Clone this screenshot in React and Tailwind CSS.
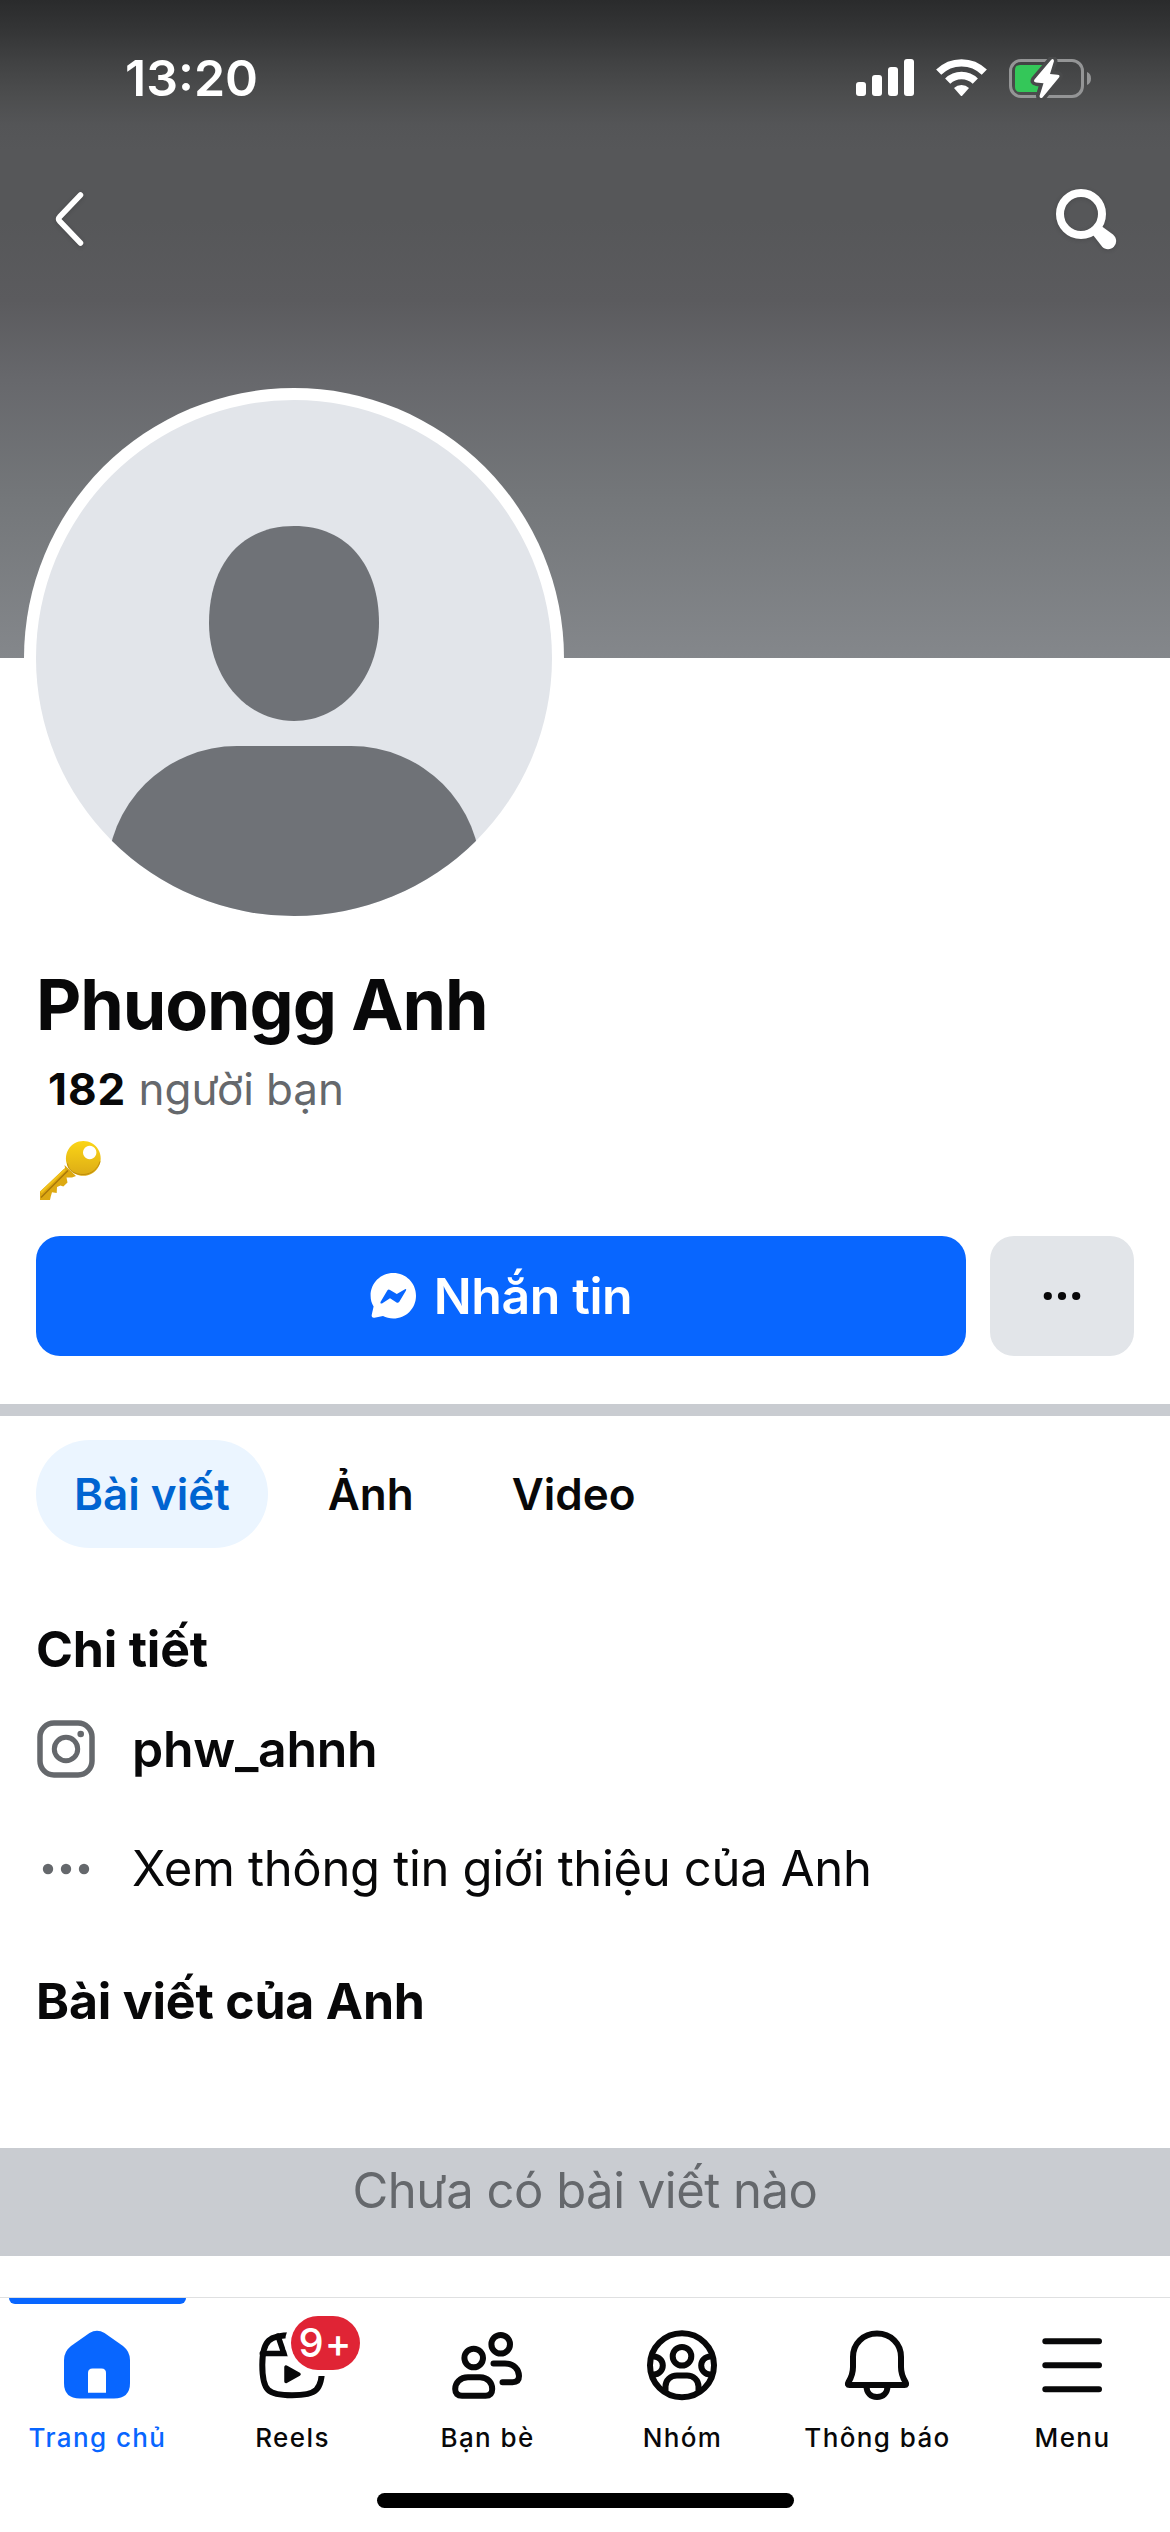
import { useState } from 'react';

const SignalIcon = () => (
  <svg width="58" height="38" viewBox="0 0 58 38" fill="white">
    <rect x="0" y="23" width="10" height="14" rx="3" />
    <rect x="16" y="16" width="10" height="21" rx="3" />
    <rect x="32" y="8" width="10" height="29" rx="3" />
    <rect x="48" y="0" width="10" height="37" rx="3" />
  </svg>
);

const WifiIcon = () => (
  <svg width="51" height="38" viewBox="0 0 51 38" fill="none" stroke="white" strokeWidth="7.3">
    <path d="M2.7 13.2A32.3 32.3 0 0 1 48.3 13.2" />
    <path d="M11.7 22.2A19.5 19.5 0 0 1 39.3 22.2" />
    <path d="M18 29A11 11 0 0 1 33 29L26.4 36.4Q25.5 37.4 24.6 36.4Z" fill="white" stroke="none" />
  </svg>
);

const BatteryIcon = () => (
  <svg width="82" height="43" viewBox="0 0 82 43" fill="none">
    <rect x="1.5" y="3.5" width="72" height="36" rx="10.5" stroke="#949596" strokeWidth="3" />
    <path d="M78 15V28C80.800 27 82 24.500 82 21.500S80.800 16 78 15Z" fill="#949596" />
    <path d="M11 8H36L28 35H11Q6 35 6 30V13Q6 8 11 8Z" fill="#34c759" />
    <path
      d="M42 3L25.5 22.500Q24 25 27 25.400L34.500 26.200L30.500 39Q30.600 42 33.500 40.500L50 20.500Q51.500 18 48.500 17.700L41 17L45 4Q44.500 0.800 42 3Z"
      fill="white"
      stroke="#494a4b"
      strokeWidth="7"
      paintOrder="stroke"
    />
  </svg>
);

const BackIcon = () => (
  <svg width="36" height="60" viewBox="0 0 36 60" fill="none" className="drop-shadow-sm">
    <path d="M29.500 6L8.500 28Q6.500 30 8.500 32L29.500 54" stroke="white" strokeWidth="5.500" strokeLinecap="round" />
  </svg>
);

const SearchIcon = () => (
  <svg width="62" height="62" viewBox="0 0 62 62" fill="none" className="drop-shadow-sm">
    <circle cx="26" cy="26" r="21" stroke="white" strokeWidth="8" />
    <path d="M38 47L47 58.500C50 62 56 62 59 58.500C62 55 62 50 58 46.500L47 38.500Z" fill="white" />
  </svg>
);

const Avatar = () => (
  <svg width="516" height="516" viewBox="0 0 516 516">
    <defs>
      <clipPath id="avatar-clip">
        <circle cx="258" cy="258" r="258" />
      </clipPath>
    </defs>
    <g clipPath="url(#avatar-clip)">
      <rect width="516" height="516" fill="#e2e5ea" />
      <g fill="#6f7277">
        <path d="M258 126C312 126 343 166 343 223C343 277 306 321 258 321S173 277 173 223C173 166 204 126 258 126Z" />
        <path d="M201 346H315A130 130 0 0 1 445 476V516H71V476A130 130 0 0 1 201 346Z" />
      </g>
    </g>
  </svg>
);

const KeyIcon = () => (
  <svg width="62" height="60" viewBox="0 0 62 60">
    <defs>
      <linearGradient id="key-gold" x1="0" y1="0" x2="0" y2="1">
        <stop offset="0" stopColor="#fbd516" />
        <stop offset="1" stopColor="#dcab16" />
      </linearGradient>
    </defs>
    <path
      d="M24.500 24L25 27L0 50.500V59H10L10.700 55.700L12 51.300L16.700 52L17 46L20.500 44.500L23.300 45.500L27.500 41.500L26.500 36.500L32 36.500L36 35Z"
      fill="#dda912"
    />
    <path d="M28 29.500L1 56.500" stroke="#a87708" strokeWidth="1.500" />
    <path d="M25 28.500L1 51.500" stroke="#f1c21b" strokeWidth="2.200" />
    <path
      fillRule="evenodd"
      d="M43.300 0A17.400 17.400 0 1 1 43.290 0ZM49.700 4.800A6.700 6.700 0 1 0 49.710 4.800Z"
      fill="url(#key-gold)"
    />
    <path d="M27.500 22.500C28 29.500 35 34 44 33.500C52 33 58 27.500 60 20.500" fill="none" stroke="#c08d0c" strokeWidth="1" />
  </svg>
);

const MessengerIcon = () => (
  <svg width="46" height="46" viewBox="0 0 46 46">
    <path
      d="M23.300 0C36 0 46 10 46 22.700S36 45.500 23.300 45.500C19.500 45.500 16 44.600 13 43L4.500 44.800C2.300 45.100 1.200 43.800 1.800 41.600L3.600 33.500C1.600 30.300 .6 26.600 .6 22.700C.6 10 10.600 0 23.300 0Z"
      fill="white"
    />
    <path
      d="M10.500 29L17.300 17.500Q18.500 16 20 17L26.800 21L35 16.200Q36.800 15.800 36 17.500L29.300 28.700Q28 30.600 26.200 29.300L20 25.200L12 30.500Q9.800 31 10.500 29Z"
      fill="#0866ff"
    />
  </svg>
);

const Dots = ({ className, r, gap }) => (
  <svg width="60" height="60" viewBox="0 0 60 60" fill="currentColor" className={className}>
    <circle cx={30 - gap} cy="30" r={r} />
    <circle cx="30" cy="30" r={r} />
    <circle cx={30 + gap} cy="30" r={r} />
  </svg>
);

const InstagramIcon = () => (
  <svg width="60" height="60" viewBox="0 0 60 60" fill="none" stroke="#65686c">
    <rect x="4" y="4" width="52" height="52" rx="14" strokeWidth="5.500" />
    <circle cx="30" cy="30" r="11.700" strokeWidth="5" />
    <circle cx="44.700" cy="15" r="3.300" fill="#65686c" stroke="none" />
  </svg>
);

const HomeIcon = () => (
  <>
    <path
      d="M28.500 4Q36 -.5 43.500 4L62 17Q69 22.500 69 31V54Q69 69.500 53 69.500H19Q3 69.500 3 54V31Q3 22.500 10 17Z"
      fill="currentColor"
      stroke="none"
    />
    <path d="M27 63.700V44Q27 39.500 31.500 39.500H40.500Q45 39.500 45 44V63.700Z" fill="white" stroke="none" />
  </>
);

const ReelsIcon = () => (
  <>
    <path d="M36 6.300C14 6.300 6.300 10 6.300 36S12 66.300 36 66.300S66.300 62 66.300 36S60 6.300 36 6.300Z" />
    <path d="M6.300 24.500H66M22 7L28 24.500" strokeWidth="5.500" />
    <path d="M30 38V52.500L43 45.300Z" fill="currentColor" strokeWidth="3.500" />
  </>
);

const FriendsIcon = () => (
  <>
    <circle cx="22.700" cy="29" r="9.300" />
    <circle cx="49.700" cy="15.300" r="9.300" />
    <path d="M17 48.300H29C37 48.300 41.200 54 41.200 60Q41.200 66.800 34.500 66.800H11Q4.200 66.800 4.200 60C4.200 54 9 48.300 17 48.300Z" />
    <path d="M42.500 34.500H54C63 34.500 68 40.500 68 47Q68 53.200 61.500 53.200H51.500" />
  </>
);

const GroupsIcon = () => (
  <>
    <circle cx="36" cy="36.300" r="32" />
    <circle cx="36" cy="27.300" r="9.300" />
    <path d="M19.500 61V57.500C19.500 51 24.500 46.500 31 46.500H41C47.500 46.500 52.500 51 52.500 57.500V61" />
    <path d="M7.800 27.600A9 9 0 0 1 7.800 45.600M64.200 27.600A9 9 0 0 0 64.200 45.600" />
  </>
);

const BellIcon = () => (
  <>
    <path d="M36 4.600C22 4.600 12 15 12 28V38C12 45 10 49 7.500 53C6.200 55.200 6.800 56 8.500 56H63.500C65.200 56 65.800 55.200 64.500 53C62 49 60 45 60 38V28C60 15 50 4.600 36 4.600Z" />
    <path d="M25.500 57C25.500 64 30 68 36 68S46.500 64 46.500 57" />
  </>
);

const MenuIcon = () => <path d="M9.300 12.300H63M9.300 36.300H63M9.300 60.300H63" />;

const tabs = ['Bài viết', 'Ảnh', 'Video'];

const navItems = [
  { label: 'Trang chủ', icon: HomeIcon },
  { label: 'Reels', icon: ReelsIcon, badge: '9+' },
  { label: 'Bạn bè', icon: FriendsIcon },
  { label: 'Nhóm', icon: GroupsIcon },
  { label: 'Thông báo', icon: BellIcon },
  { label: 'Menu', icon: MenuIcon },
];

export default function App() {
  const [tab, setTab] = useState('Bài viết');
  const [page, setPage] = useState('Trang chủ');

  return (
    <div className="flex h-[2532px] w-[1170px] flex-col overflow-hidden bg-white font-['Inter',sans-serif] text-[#080809]">
      <header className="h-[658px] shrink-0 bg-[linear-gradient(#2a2b2c_0px,#343536_30px,#424344_65px,#4c4d4e_95px,#545557_125px,#565759_150px,#565759_220px,#5b5b5e_300px,#67686c_380px,#74777a_500px,#84878b_658px)]">
        <div className="flex h-[156px] items-center justify-between pr-[79px] pl-[125px]">
          <span className="text-[50px] font-semibold text-white">13:20</span>
          <div className="flex items-center">
            <SignalIcon />
            <div className="ml-[22px]">
              <WifiIcon />
            </div>
            <div className="ml-[22px]">
              <BatteryIcon />
            </div>
          </div>
        </div>
        <div className="mt-8 flex h-[62px] items-center justify-between pr-[53px] pl-[51px]">
          <button>
            <BackIcon />
          </button>
          <button>
            <SearchIcon />
          </button>
        </div>
      </header>

      <section className="relative -mt-[270px] shrink-0">
        <div className="ml-6 h-[540px] w-[540px] rounded-full bg-white p-3">
          <Avatar />
        </div>
        <div className="px-9">
          <h1 className="mt-9 h-[81px] text-[70px] leading-[81px] font-bold tracking-[-1.1px]">Phuongg Anh</h1>
          <p className="mt-4 h-14 pl-3 text-[44px] leading-14 tracking-[-0.1px] text-[#65686c]">
            <span className="font-bold tracking-[1px] text-[#080809]">182</span> người bạn
          </p>
          <div className="mt-6 ml-1 h-[60px]">
            <KeyIcon />
          </div>
          <div className="mt-[35px] flex gap-6">
            <button className="flex h-[120px] flex-1 items-center justify-center gap-[18px] rounded-3xl bg-[#0866ff] text-[50px] font-semibold tracking-[-0.4px] text-white">
              <MessengerIcon />
              <span>Nhắn tin</span>
            </button>
            <button className="flex h-[120px] w-36 items-center justify-center rounded-3xl bg-[#e2e5e9]">
              <Dots r={4.1} gap={14.2} />
            </button>
          </div>
        </div>
      </section>

      <div className="mt-12 h-3 shrink-0 bg-[#c9ccd1]" />

      <div className="mt-6 flex px-9">
        {tabs.map((t) => (
          <button
            key={t}
            onClick={() => setTab(t)}
            className={`mr-[22px] h-[108px] rounded-full px-[38px] text-[44px] font-semibold ${
              t === tab ? 'bg-[#ebf5ff] text-[#0064d1]' : ''
            }`}
          >
            {t}
          </button>
        ))}
      </div>

      <section className="px-9">
        <h2 className="mt-[72px] h-[59px] text-[50px] leading-[59px] font-bold tracking-[-0.2px]">Chi tiết</h2>
        <div className="mt-10 flex h-[60px] items-center gap-9">
          <InstagramIcon />
          <span className="text-[50px] leading-[60px] font-semibold tracking-[-0.3px]">phw_ahnh</span>
        </div>
        <div className="mt-[60px] flex h-[60px] items-center gap-9">
          <Dots className="text-[#65686c]" r={5.2} gap={18} />
          <span className="text-[49px] leading-[60px] tracking-[-0.33px]">Xem thông tin giới thiệu của Anh</span>
        </div>
        <h2 className="mt-[72px] h-[60px] text-[50px] leading-[60px] font-bold tracking-[-0.2px]">Bài viết của Anh</h2>
      </section>

      <div className="mt-[117px] h-[108px] shrink-0 bg-[#c9ccd1] text-center text-[49px] leading-[86px] tracking-[-0.5px] text-[#65686c]">
        Chưa có bài viết nào
      </div>

      <nav className="mt-[41px] h-[235px] border-t border-[#dfe0e1]">
        <div className="grid grid-cols-6">
          {navItems.map(({ label, icon: Icon, badge }) => (
            <button
              key={label}
              onClick={() => setPage(label)}
              className={`flex flex-col items-center ${label === page ? 'text-[#0866ff]' : ''}`}
            >
              <div className={`h-1.5 w-[177px] rounded-b-md ${label === page ? 'bg-[#0866ff]' : ''}`} />
              <div className="relative mt-[25px]">
                <svg
                  width="73"
                  height="72"
                  viewBox="0 0 73 72"
                  fill="none"
                  stroke="currentColor"
                  strokeWidth="6"
                  strokeLinecap="round"
                  strokeLinejoin="round"
                >
                  <Icon />
                </svg>
                {badge && (
                  <span className="absolute -top-[13px] left-[35px] flex h-[54px] w-[69px] items-center justify-center rounded-full bg-[#e02435] text-[40px] font-medium tracking-[1px] text-white ring-6 ring-white">
                    {badge}
                  </span>
                )}
              </div>
              <span className="mt-[21px] text-[26px] leading-8 font-medium tracking-[1.4px]">{label}</span>
            </button>
          ))}
        </div>
        <div className="mx-auto mt-[39px] h-[15px] w-[417px] rounded-full bg-black" />
      </nav>
    </div>
  );
}
